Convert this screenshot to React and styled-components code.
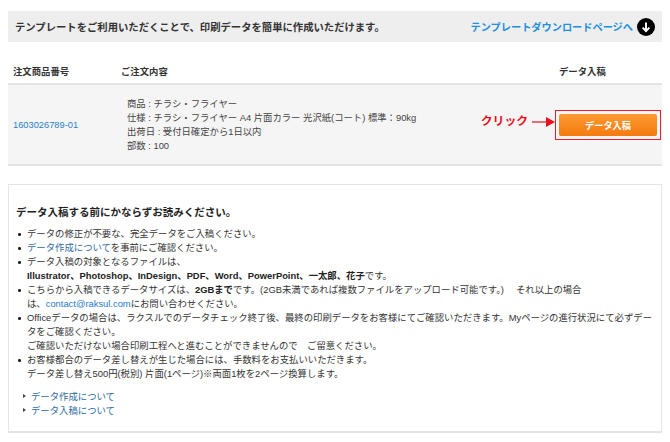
import styled, { createGlobalStyle } from "styled-components";

const Global = createGlobalStyle`
  html, body {
    margin: 0;
    padding: 0;
    background: #fff;
  }
  body {
    font-family: "Liberation Sans", "Noto Sans CJK JP", sans-serif;
    color: #333;
    -webkit-font-smoothing: antialiased;
  }
`;

const Page = styled.div`
  width: 654px;
  height: 442px;
  padding: 11px 8px 0;
`;

const Banner = styled.div`
  display: flex;
  align-items: center;
  justify-content: space-between;
  height: 31px;
  padding: 0 7px 0 7px;
  background: #eeeeee;
`;

const BannerText = styled.p`
  margin: 0;
  font-size: 10.33px;
  font-weight: 700;
  color: #333;
`;

const BannerLink = styled.a`
  display: flex;
  align-items: center;
  gap: 4px;
  font-size: 10.2px;
  font-weight: 700;
  color: #1d8fdc;
`;

const Table = styled.div`
  margin-top: 21px;
`;

const HeadRow = styled.div`
  display: grid;
  grid-template-columns: 108px 1fr 103px;
  height: 20px;
  padding-left: 5px;
  border-bottom: 2px solid #e4e4e4;
  font-size: 9.35px;
  font-weight: 700;
  line-height: 18px;
  color: #333;
`;

const BodyRow = styled.div`
  display: grid;
  grid-template-columns: 114px 1fr auto;
  align-items: center;
  height: 79px;
  padding-left: 5px;
  background: #f5f5f5;
  border-bottom: 2px solid #e4e4e4;
`;

const OrderNo = styled.a`
  font-size: 9.3px;
  color: #2a7fc9;
`;

const Spec = styled.div`
  font-size: 9.35px;
  line-height: 14px;
  color: #444;
`;

const Action = styled.div`
  display: flex;
  align-items: center;
  padding-right: 1px;
`;

const ClickLabel = styled.span`
  margin-right: 4px;
  padding-bottom: 11px;
  font-size: 11.8px;
  font-weight: 700;
  color: #e8101c;
`;

const ArrowSvg = styled.svg`
  margin-bottom: 5px;
`;

const ButtonFrame = styled.div`
  padding: 3px;
  border: 1px solid #ee1c25;
`;

const OrangeButton = styled.div`
  display: flex;
  align-items: center;
  justify-content: center;
  width: 98px;
  height: 22px;
  border-radius: 2px;
  background: linear-gradient(#fc9a32, #f57a0e);
  font-size: 9.2px;
  font-weight: 700;
  color: #fff;
`;

const Notice = styled.section`
  margin-top: 18px;
  height: 226px;
  padding: 20px 7px 0;
  background: #fff;
  border: 1px solid #e4e4e4;
  border-bottom-width: 2px;
`;

const NoticeTitle = styled.h2`
  margin: 0 0 8px;
  font-size: 10.5px;
  line-height: 14px;
  font-weight: 700;
  color: #222;
`;

const BulletList = styled.ul`
  margin: 0;
  padding: 0 0 0 11px;
  list-style: none;
  font-size: 9.37px;
  line-height: 14px;
  color: #333;
`;

const Bullet = styled.li`
  position: relative;
  &::before {
    content: "";
    position: absolute;
    left: -9px;
    top: 6px;
    width: 2.5px;
    height: 2.5px;
    border-radius: 50%;
    background: #222;
  }
`;

const Strong = styled.strong`
  color: #222;
`;

const TextLink = styled.a`
  color: ${(p) => p.$color || "#2f6a9e"};
`;

const GuideList = styled.ul`
  margin: 9px 0 0;
  padding: 0 0 0 15px;
  list-style: none;
  font-size: 9.37px;
  line-height: 14px;
`;

const GuideItem = styled.li`
  position: relative;
  color: #2f6a9e;
  &::before {
    content: "";
    position: absolute;
    left: -8px;
    top: 4px;
    border-left: 3px solid #444;
    border-top: 2px solid transparent;
    border-bottom: 2px solid transparent;
  }
`;

function DownArrow() {
  return (
    <svg width="18" height="18" viewBox="0 0 18 18">
      <circle cx="9" cy="9" r="9" fill="#000" />
      <path d="M9 4.5V13M5.6 9.6L9 13l3.4-3.4" fill="none" stroke="#fff" strokeWidth="2" />
    </svg>
  );
}

function ClickArrow() {
  return (
    <ArrowSvg width="23" height="10" viewBox="0 0 23 10">
      <path d="M0 5h16" stroke="#e8101c" strokeWidth="1.2" />
      <path d="M14 0l9 5-9 5z" fill="#e8101c" />
    </ArrowSvg>
  );
}

export default function App() {
  return (
    <Page>
      <Global />
      <Banner>
        <BannerText>テンプレートをご利用いただくことで、印刷データを簡単に作成いただけます。</BannerText>
        <BannerLink>
          テンプレートダウンロードページへ
          <DownArrow />
        </BannerLink>
      </Banner>
      <Table>
        <HeadRow>
          <div>注文商品番号</div>
          <div>ご注文内容</div>
          <div>データ入稿</div>
        </HeadRow>
        <BodyRow>
          <OrderNo>1603026789-01</OrderNo>
          <Spec>
            商品 : チラシ・フライヤー
            <br />
            仕様 : チラシ・フライヤー A4 片面カラー 光沢紙(コート) 標準：90kg
            <br />
            出荷日 : 受付日確定から1日以内
            <br />
            部数 : 100
          </Spec>
          <Action>
            <ClickLabel>クリック</ClickLabel>
            <ClickArrow />
            <ButtonFrame>
              <OrangeButton>データ入稿</OrangeButton>
            </ButtonFrame>
          </Action>
        </BodyRow>
      </Table>
      <Notice>
        <NoticeTitle>データ入稿する前にかならずお読みください。</NoticeTitle>
        <BulletList>
          <Bullet>データの修正が不要な、完全データをご入稿ください。</Bullet>
          <Bullet>
            <TextLink>データ作成について</TextLink>を事前にご確認ください。
          </Bullet>
          <Bullet>
            データ入稿の対象となるファイルは、
            <br />
            <Strong>Illustrator、Photoshop、InDesign、PDF、Word、PowerPoint、一太郎、花子</Strong>です。
          </Bullet>
          <Bullet>
            こちらから入稿できるデータサイズは、<Strong>2GBまで</Strong>です。(2GB未満であれば複数ファイルをアップロード可能です。)　 それ以上の場合
            <br />
            は、<TextLink $color="#1f78c8">contact@raksul.com</TextLink>にお問い合わせください。
          </Bullet>
          <Bullet>
            Officeデータの場合は、ラクスルでのデータチェック終了後、最終の印刷データをお客様にてご確認いただきます。Myページの進行状況にて必ずデー
            <br />
            タをご確認ください。
            <br />
            ご確認いただけない場合印刷工程へと進むことができませんので　ご留意ください。
          </Bullet>
          <Bullet>
            お客様都合のデータ差し替えが生じた場合には、手数料をお支払いいただきます。
            <br />
            データ差し替え500円(税別) 片面(1ページ)※両面1枚を2ページ換算します。
          </Bullet>
        </BulletList>
        <GuideList>
          <GuideItem>データ作成について</GuideItem>
          <GuideItem>データ入稿について</GuideItem>
        </GuideList>
      </Notice>
    </Page>
  );
}
